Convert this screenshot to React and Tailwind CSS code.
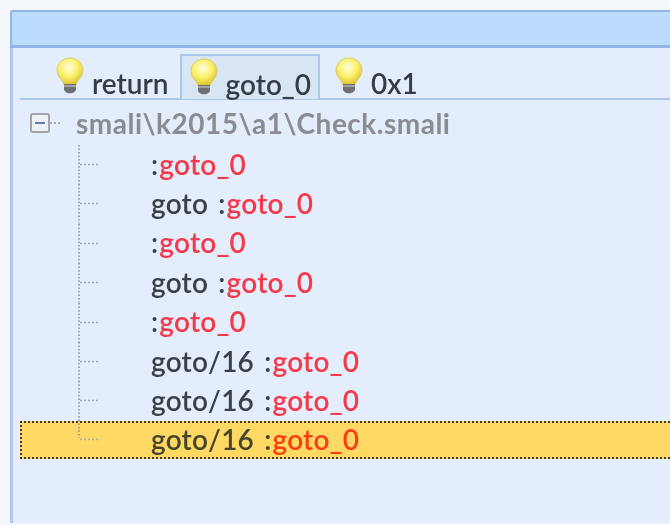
const font = { fontFamily: 'Lato, "Open Sans", sans-serif' };

function Bulb() {
  return (
    <svg width="28" height="37" viewBox="0 0 28 37" className="shrink-0">
      <defs>
        <radialGradient id="bulbFill" cx="45%" cy="35%" r="65%">
          <stop offset="0%" stopColor="#fffde0" />
          <stop offset="55%" stopColor="#fbf06a" />
          <stop offset="100%" stopColor="#dcc430" />
        </radialGradient>
      </defs>
      <path d="M14 1C6.5 1 1 6.6 1 13.2c0 5 3 7.6 5 10.5 1 1.5 1.4 2.6 1.6 3.8h12.8c.2-1.2.6-2.3 1.6-3.8 2-2.9 5-5.5 5-10.5C27 6.6 21.5 1 14 1z" fill="url(#bulbFill)" stroke="#d8cc70" strokeWidth="1" />
      <path d="M8 27h12v5.5c0 1.5-2.5 3.8-6 3.8s-6-2.3-6-3.8z" fill="#6e7074" />
      <path d="M8 29h12" stroke="#b0b2b6" strokeWidth="1.5" />
    </svg>
  );
}

function Connector({ last }) {
  return (
    <svg width="24" height="39.4" viewBox="0 0 24 39.4" className="shrink-0 overflow-visible">
      <path d={last ? "M2 0V18" : "M2 0V39.4"} stroke="#8f949c" strokeWidth="1.6" strokeDasharray="1.5 2" fill="none" />
      <path d="M3 19.5H23" stroke="#a2a7ae" strokeWidth="1.4" strokeDasharray="2 2" fill="none" />
    </svg>
  );
}

function Row({ prefix, last }) {
  return (
    <div className={last
      ? "flex items-center h-[38px] mt-[0.4px] ml-[7px] pl-[55px] bg-[#ffd963] border-2 border-dotted border-[#3d3a2c] border-r-0"
      : "flex items-center h-[39.4px] pl-[64px]"}>
      <Connector last={last} />
      <div className={last
        ? "ml-[50px] mb-[2px] text-[28px] font-semibold tracking-[0.2px] [word-spacing:3px] text-[#45452a] leading-none whitespace-pre"
        : "ml-[50px] mb-[2px] text-[28px] font-semibold tracking-[0.2px] [word-spacing:3px] text-[#3b414a] leading-none whitespace-pre"}>
        {prefix}
        <span className={last ? "ml-[1px] text-[#fb3d12]" : "ml-[1px] text-[#f5384a]"}>goto_0</span>
      </div>
    </div>
  );
}

function Tab({ label, active }) {
  return (
    <div className={active
      ? "flex items-end gap-[8px] h-[45px] -mb-px pl-[8px] pr-[7px] bg-[#d8e5f3] border-t-2 border-x-2 border-[#a9c6ec]"
      : "flex items-end gap-[8px] h-[45px] pr-[11px]"}>
      <div className="mb-[4px]"><Bulb /></div>
      <span className="text-[28px] font-semibold leading-none mb-[1px] text-[#363c46]">{label}</span>
    </div>
  );
}

export default function App() {
  const rows = [":", "goto :", ":", "goto :", ":", "goto/16 :", "goto/16 :"];
  return (
    <div className="w-[670px] h-[525px] overflow-hidden bg-[#f4f7fc] pt-[5px] pl-[10px] pb-[2px]" style={font}>
      <div className="h-full blur-[0.6px] flex flex-col">
        <div className="h-[5px]" />
        <div className="h-[38px] bg-[#bcdcff] border-t-2 border-l-2 border-b-[3px] border-[#93b4ea] rounded-tl-[3px] shrink-0" />
        <div className="flex-1 bg-[#e4edfb] border-l-[3px] border-[#a9c8f5]">
          <div className="h-[52px] flex items-end pl-[36px] border-b-2 border-[#a9c6ec] ml-[7px]">
            <Tab label="return" />
            <Tab label="goto_0" active />
            <div className="ml-[15px]"><Tab label="0x1" /></div>
          </div>
          <div className="h-[45px] flex items-center pl-[17px]">
            <div className="w-[20px] h-[20px] rounded-[3px] border-2 border-[#a2a4a8] bg-[#eef1f6] flex items-center justify-center">
              <div className="w-[10px] h-[2px] bg-[#6680b4]" />
            </div>
            <div className="w-[10px] border-t-2 border-dotted border-[#a8acb2]" />
            <span className="ml-[16px] mt-[1px] text-[28px] font-bold tracking-[0.5px] text-[#8a8c8f] leading-none">smali\k2015\a1\Check.smali</span>
          </div>
          {rows.map((r, i) => <Row key={i} prefix={r} />)}
          <Row prefix="goto/16 :" last />
        </div>
      </div>
    </div>
  );
}
